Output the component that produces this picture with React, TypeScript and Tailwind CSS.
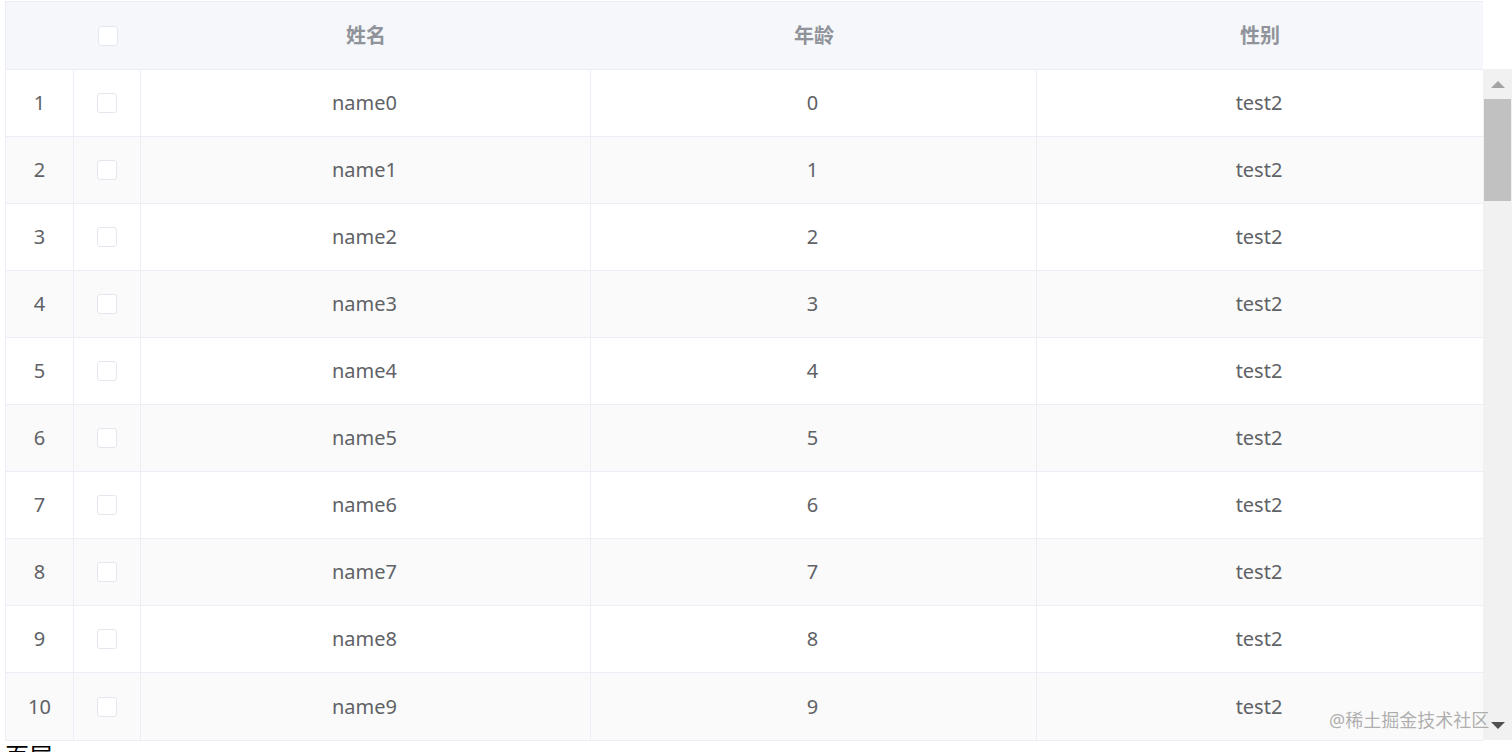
import React from "react";

const rows = Array.from({ length: 10 }).map((_, i) => ({
  idx: i + 1,
  name: `name${i}`,
  age: i,
  sex: "test2",
}));

const Check = () => (
  <span className="block w-[20px] h-[20px] rounded-[3px] border border-[#e4e7ed] bg-white" />
);

const App = () => {
  return (
    <main
      className="relative h-[752px] overflow-hidden bg-white"
      style={{ fontFamily: '"Noto Sans", "Noto Sans CJK SC", sans-serif' }}
    >
      <section className="flex pl-[5px] pt-[1px]">
        <section className="w-[1478px] border-t border-l border-b border-[#ebeef5] text-[20px] text-[#606266]">
          <section className="grid grid-cols-[68px_67px_450px_446px_1fr] h-[68px] bg-[#f5f7fa] border-b border-[#ebeef5] font-bold text-[#909399]">
            <div />
            <div className="flex items-center justify-center">
              <Check />
            </div>
            <div className="flex items-center justify-center">姓名</div>
            <div className="flex items-center justify-center">年龄</div>
            <div className="flex items-center justify-center">性别</div>
          </section>
          {rows.map((r) => (
            <section
              key={r.idx}
              className={`grid grid-cols-[68px_67px_450px_446px_1fr] h-[67px] ${
                r.idx % 2 === 0 ? "bg-[#fafafa]" : "bg-white"
              } ${r.idx < 10 ? "border-b border-[#ebeef5]" : ""}`}
            >
              <div className="flex items-center justify-center border-r border-[#ebeef5]">{r.idx}</div>
              <div className="flex items-center justify-center border-r border-[#ebeef5]">
                <Check />
              </div>
              <div className="flex items-center justify-center border-r border-[#ebeef5] pr-[2px]">{r.name}</div>
              <div className="flex items-center justify-center border-r border-[#ebeef5] pr-[2px]">{r.age}</div>
              <div className="flex items-center justify-center pr-[2px]">{r.sex}</div>
            </section>
          ))}
        </section>
        <section className="w-[29px] flex flex-col">
          <div className="h-[68px] bg-white" />
          <div className="h-[671px] bg-[#f1f1f1] flex flex-col">
            <div className="h-[30px] flex items-center justify-center">
              <span className="block w-0 h-0 border-l-[7px] border-r-[7px] border-b-[7px] border-l-transparent border-r-transparent border-b-[#a3a3a3]" />
            </div>
            <div className="h-[102px] mx-[1px] bg-[#c1c1c1]" />
            <div className="flex-1" />
            <div className="h-[30px] flex items-center justify-center">
              <span className="block w-0 h-0 border-l-[7px] border-r-[7px] border-t-[7px] border-l-transparent border-r-transparent border-t-[#505050]" />
            </div>
          </div>
        </section>
      </section>
      <p
        className="pl-[5px] text-[24px] leading-[28px] text-black"
        style={{ fontFamily: '"Noto Sans CJK SC", sans-serif' }}
      >
        页尾
      </p>
      <span className="absolute left-[1329px] top-[707px] text-[18px] text-[#9a9a9a]/80">
        @稀土掘金技术社区
      </span>
    </main>
  );
};

export default App;
